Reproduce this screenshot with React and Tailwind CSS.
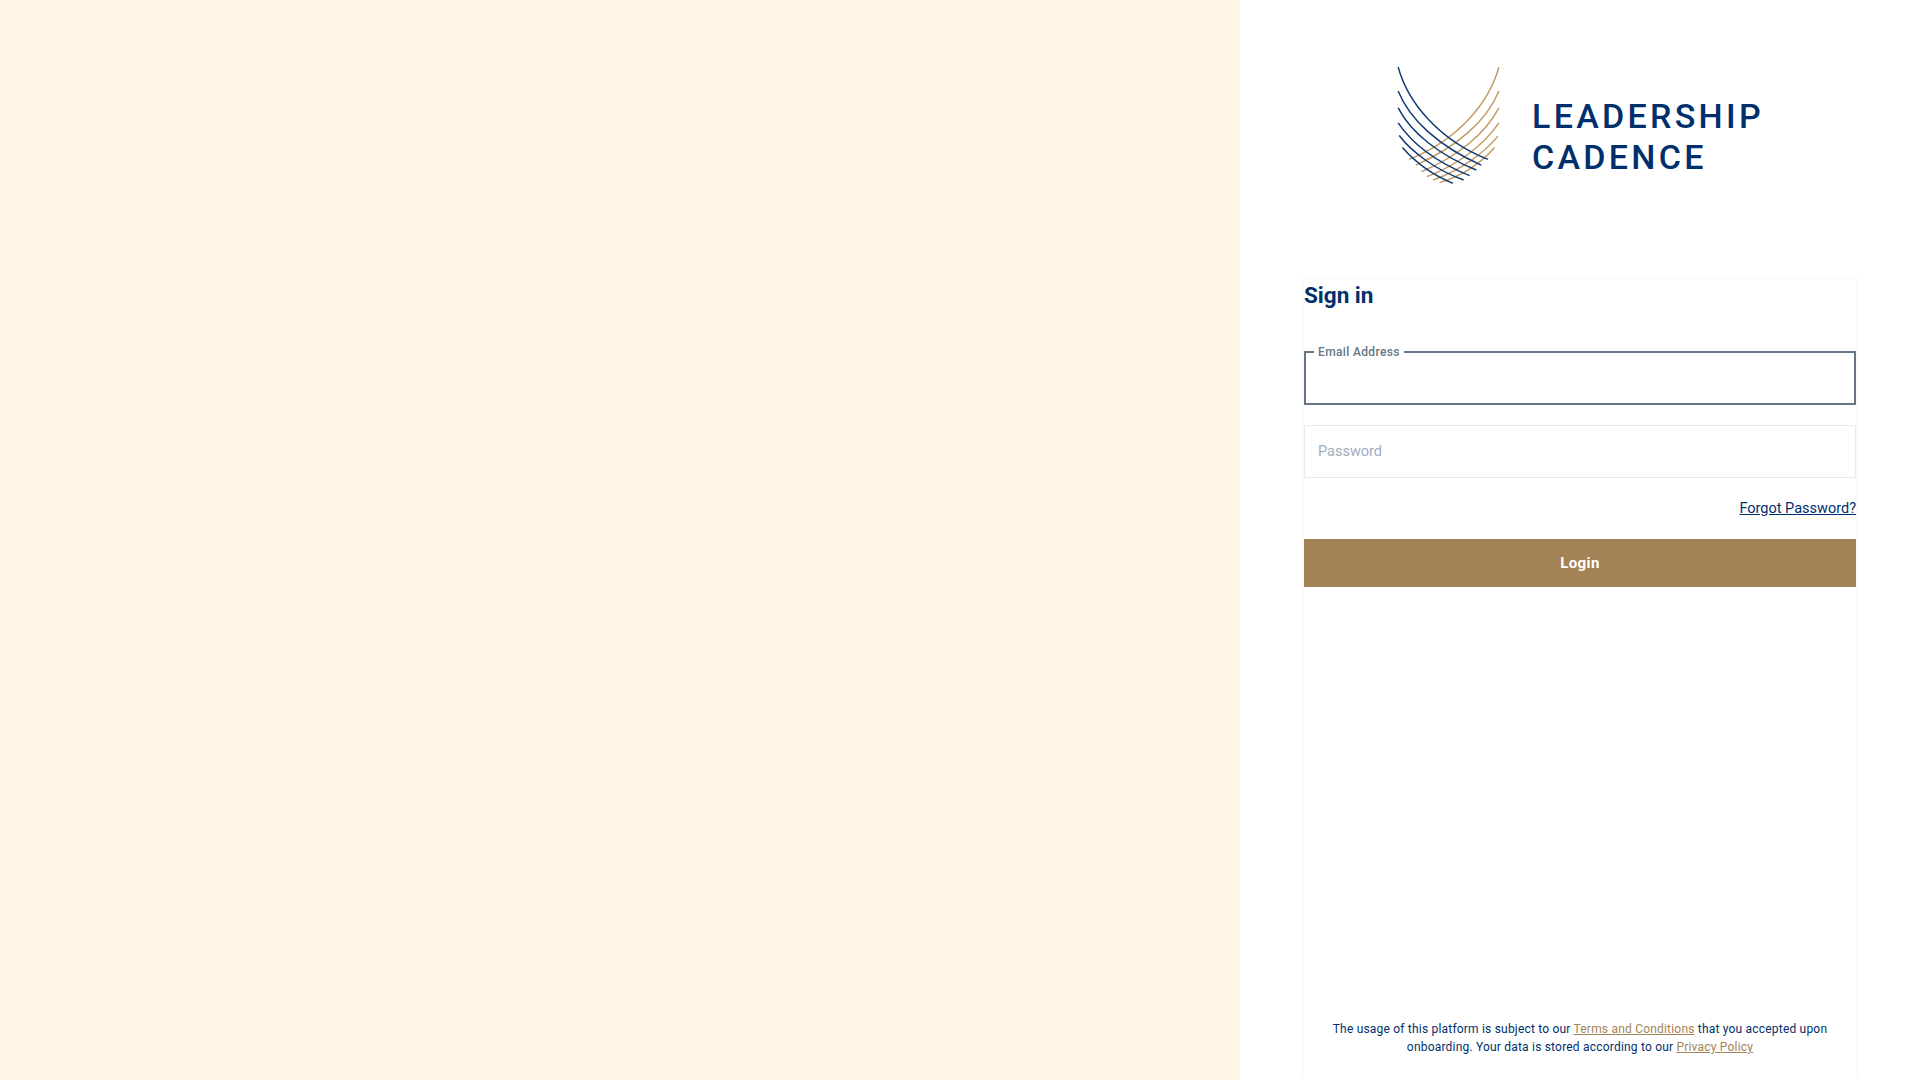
const FONT = "font-['Roboto','Liberation_Sans',sans-serif]";

const blue = [
  "M25 20C55 130 150 240 295 298",
  "M25 92C60 180 150 260 275 315",
  "M25 143C65 220 150 285 260 330",
  "M25 188C70 255 150 310 240 347",
  "M28 226C70 280 140 330 222 360",
  "M38 262C75 305 130 345 190 370",
];
const gold = [
  "M328 20C298 130 203 240 58 298",
  "M328 92C293 180 203 260 78 315",
  "M328 143C288 220 203 290 95 335",
  "M328 188C283 255 203 315 112 350",
  "M325 228C283 280 213 330 130 360",
  "M315 262C278 305 223 345 150 368",
];

function Mark() {
  return (
    <svg viewBox="0 0 354 352" className="w-[118px] h-[117px] shrink-0" fill="none">
      <g transform="translate(-13,-20)">
        {gold.map((d) => <path key={d} d={d} stroke="#C49A63" strokeWidth="4.4" />)}
        {blue.map((d) => <path key={d} d={d} stroke="#0E3A72" strokeWidth="4.4" />)}
      </g>
    </svg>
  );
}

export default function App() {
  return (
    <div className={`flex h-screen w-full overflow-hidden bg-white ${FONT}`}>
      <div className="w-[1240px] shrink-0 bg-[#FFF5E6]" />
      <div className="flex flex-1 flex-col px-16">
        <div className="flex h-[279px] shrink-0 justify-center pt-[67px] pr-[2px]">
          <div className="flex h-[118px] gap-[20px]">
            <Mark />
            <div className="-mt-[1px] pt-[30px] text-[34px] font-medium leading-[41px] tracking-[3.3px] text-[#002F6C]">
              <div>LEADERSHIP</div>
              <div>CADENCE</div>
            </div>
          </div>
        </div>
        <div className="flex flex-1 flex-col bg-white shadow-[0_0_6px_rgba(0,0,0,0.06)]">
          <h1 className="text-[22.5px] font-bold leading-[32px] text-[#002F6C]">Sign in</h1>
          <div className="relative mt-[40px] h-[54px] border-2 border-[#667686]">
            <label className="absolute -top-[9px] left-2 bg-white px-1 text-[12px] font-medium leading-[16px] tracking-[0.35px] text-[#667686]">Email Address</label>
            <input className="h-full w-full px-3 text-[15px] outline-none" />
          </div>
          <input
            type="password"
            placeholder="Password"
            className="mt-[20px] h-[53px] w-full border border-[#E8EAED] px-[13px] text-[14.5px] outline-none placeholder:text-[#A0AEC0]"
          />
          <div className="mt-[21px] flex justify-end">
            <a href="#" className="text-[14.5px] leading-[20px] text-[#002F6C] underline">Forgot Password?</a>
          </div>
          <button className="mt-[20px] h-[48px] w-full bg-[#A38356] text-[15px] font-bold tracking-[0.4px] text-white">Login</button>
          <p className="mt-auto mb-[24px] px-6 text-center text-[12px] leading-[18px] tracking-[0.2px] text-[#002F6C]">
            The usage of this platform is subject to our <a href="#" className="text-[#A38356] underline">Terms and Conditions</a> that you accepted upon onboarding. Your data is stored according to our <a href="#" className="text-[#A38356] underline">Privacy Policy</a>
          </p>
        </div>
      </div>
    </div>
  );
}
